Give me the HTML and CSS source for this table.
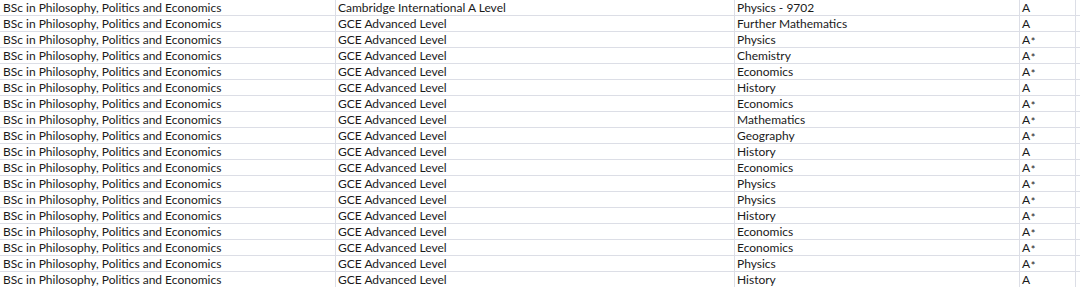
FILE: index.html
```html
<!DOCTYPE html>
<html lang="en">
<head>
<meta charset="utf-8">
<title>Sheet</title>
<link rel="stylesheet" href="styles.css">
</head>
<body>
<div class="sheet">
  <div class="row"><div class="cell c-a">BSc in Philosophy, Politics and Economics</div><div class="cell c-b">Cambridge International A Level</div><div class="cell c-c">Physics - 9702</div><div class="cell c-d">A</div><div class="cell c-e"></div></div>
  <div class="row"><div class="cell c-a">BSc in Philosophy, Politics and Economics</div><div class="cell c-b">GCE Advanced Level</div><div class="cell c-c">Further Mathematics</div><div class="cell c-d">A</div><div class="cell c-e"></div></div>
  <div class="row"><div class="cell c-a">BSc in Philosophy, Politics and Economics</div><div class="cell c-b">GCE Advanced Level</div><div class="cell c-c">Physics</div><div class="cell c-d">A<span class="star">*</span></div><div class="cell c-e"></div></div>
  <div class="row"><div class="cell c-a">BSc in Philosophy, Politics and Economics</div><div class="cell c-b">GCE Advanced Level</div><div class="cell c-c">Chemistry</div><div class="cell c-d">A<span class="star">*</span></div><div class="cell c-e"></div></div>
  <div class="row"><div class="cell c-a">BSc in Philosophy, Politics and Economics</div><div class="cell c-b">GCE Advanced Level</div><div class="cell c-c">Economics</div><div class="cell c-d">A<span class="star">*</span></div><div class="cell c-e"></div></div>
  <div class="row"><div class="cell c-a">BSc in Philosophy, Politics and Economics</div><div class="cell c-b">GCE Advanced Level</div><div class="cell c-c">History</div><div class="cell c-d">A</div><div class="cell c-e"></div></div>
  <div class="row"><div class="cell c-a">BSc in Philosophy, Politics and Economics</div><div class="cell c-b">GCE Advanced Level</div><div class="cell c-c">Economics</div><div class="cell c-d">A<span class="star">*</span></div><div class="cell c-e"></div></div>
  <div class="row"><div class="cell c-a">BSc in Philosophy, Politics and Economics</div><div class="cell c-b">GCE Advanced Level</div><div class="cell c-c">Mathematics</div><div class="cell c-d">A<span class="star">*</span></div><div class="cell c-e"></div></div>
  <div class="row"><div class="cell c-a">BSc in Philosophy, Politics and Economics</div><div class="cell c-b">GCE Advanced Level</div><div class="cell c-c">Geography</div><div class="cell c-d">A<span class="star">*</span></div><div class="cell c-e"></div></div>
  <div class="row"><div class="cell c-a">BSc in Philosophy, Politics and Economics</div><div class="cell c-b">GCE Advanced Level</div><div class="cell c-c">History</div><div class="cell c-d">A</div><div class="cell c-e"></div></div>
  <div class="row"><div class="cell c-a">BSc in Philosophy, Politics and Economics</div><div class="cell c-b">GCE Advanced Level</div><div class="cell c-c">Economics</div><div class="cell c-d">A<span class="star">*</span></div><div class="cell c-e"></div></div>
  <div class="row"><div class="cell c-a">BSc in Philosophy, Politics and Economics</div><div class="cell c-b">GCE Advanced Level</div><div class="cell c-c">Physics</div><div class="cell c-d">A<span class="star">*</span></div><div class="cell c-e"></div></div>
  <div class="row"><div class="cell c-a">BSc in Philosophy, Politics and Economics</div><div class="cell c-b">GCE Advanced Level</div><div class="cell c-c">Physics</div><div class="cell c-d">A<span class="star">*</span></div><div class="cell c-e"></div></div>
  <div class="row"><div class="cell c-a">BSc in Philosophy, Politics and Economics</div><div class="cell c-b">GCE Advanced Level</div><div class="cell c-c">History</div><div class="cell c-d">A<span class="star">*</span></div><div class="cell c-e"></div></div>
  <div class="row"><div class="cell c-a">BSc in Philosophy, Politics and Economics</div><div class="cell c-b">GCE Advanced Level</div><div class="cell c-c">Economics</div><div class="cell c-d">A<span class="star">*</span></div><div class="cell c-e"></div></div>
  <div class="row"><div class="cell c-a">BSc in Philosophy, Politics and Economics</div><div class="cell c-b">GCE Advanced Level</div><div class="cell c-c">Economics</div><div class="cell c-d">A<span class="star">*</span></div><div class="cell c-e"></div></div>
  <div class="row"><div class="cell c-a">BSc in Philosophy, Politics and Economics</div><div class="cell c-b">GCE Advanced Level</div><div class="cell c-c">Physics</div><div class="cell c-d">A<span class="star">*</span></div><div class="cell c-e"></div></div>
  <div class="row"><div class="cell c-a">BSc in Philosophy, Politics and Economics</div><div class="cell c-b">GCE Advanced Level</div><div class="cell c-c">History</div><div class="cell c-d">A</div><div class="cell c-e"></div></div>
</div>
</body>
</html>
```
FILE: styles.css
```css
html, body {
  margin: 0;
  padding: 0;
  background: #ffffff;
}

body {
  width: 1080px;
  height: 287px;
  overflow: hidden;
  font-family: "Lato", "Liberation Sans", Arial, sans-serif;
  font-size: 12px;
  color: #1a1a1a;
}

.sheet {
  display: flex;
  flex-direction: column;
}

.row {
  display: grid;
  grid-template-columns: 336px 399px 285px 56px 1fr;
  height: 16px;
}

.cell {
  box-sizing: border-box;
  height: 16px;
  border-right: 1px solid #dcdee6;
  border-bottom: 1px solid #dcdee6;
  padding-left: 3px;
  line-height: 15px;
  white-space: nowrap;
  overflow: hidden;
}

.c-b,
.c-c,
.c-d {
  padding-left: 2px;
}

.c-e {
  border-right: none;
}

.star {
  font-size: 11px;
  vertical-align: -2px;
  margin-left: 0.5px;
}
```
